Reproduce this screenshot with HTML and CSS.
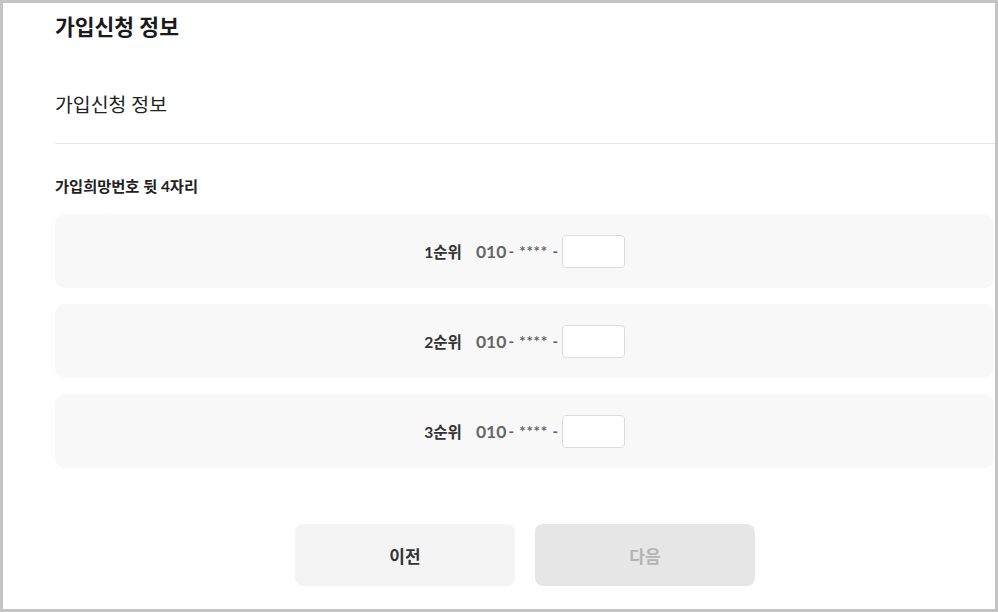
FILE: index.html
```html
<!doctype html>
<html lang="ko">
<head>
  <meta charset="UTF-8">
  <meta name="viewport" content="width=device-width, initial-scale=1.0">
  <title>가입신청 정보</title>
  <link rel="stylesheet" href="styles.css">
</head>
<body>
  <main class="page">
    <h1 class="page-title">가입신청 정보</h1>

    <h2 class="section-title">가입신청 정보</h2>

    <p class="field-label">가입희망번호 뒷 4자리</p>

    <div class="rank-list">
      <div class="rank-row">
        <span class="rank">1순위</span>
        <span class="prefix">010</span>
        <span class="mask">- **** -</span>
        <input type="text" class="num-input" maxlength="4">
      </div>
      <div class="rank-row">
        <span class="rank">2순위</span>
        <span class="prefix">010</span>
        <span class="mask">- **** -</span>
        <input type="text" class="num-input" maxlength="4">
      </div>
      <div class="rank-row">
        <span class="rank">3순위</span>
        <span class="prefix">010</span>
        <span class="mask">- **** -</span>
        <input type="text" class="num-input" maxlength="4">
      </div>
    </div>

    <div class="actions">
      <button class="btn btn-prev">이전</button>
      <button class="btn btn-next" disabled>다음</button>
    </div>
  </main>
</body>
</html>
```

FILE: styles.css
```css
* { box-sizing: border-box; }
html, body { margin: 0; height: 100%; }
body { font-family: Lato, "Noto Sans CJK KR", sans-serif; color: #222; background: #fff; border: 3px solid #c4c4c4; overflow: hidden; }
.page { padding: 0 0 0 52px; }
.page-title { margin: 0; padding-top: 9px; font-size: 21.5px; line-height: 30px; font-weight: 700; color: #1a1a1a; }
.section-title { margin: 0; padding: 49px 0 25px; font-size: 19.4px; line-height: 27px; font-weight: 400; color: #222; border-bottom: 1px solid #e6e6e6; }
.field-label { margin: 32px 0 18px; font-size: 15.3px; line-height: 20px; font-weight: 700; color: #222; }
.rank-list { display: flex; flex-direction: column; gap: 16px; }
.rank-row { height: 74px; background: #f8f8f8; border-radius: 10px; display: flex; align-items: center; justify-content: center; margin-right: 1px; }
.rank { font-size: 15.6px; font-weight: 700; color: #333; margin-right: 14px; }
.prefix { font-size: 17.5px; font-weight: 700; color: #666; }
.mask { font-size: 15px; font-weight: 700; color: #666; margin: 0 3px 0 2px; letter-spacing: 0.8px; }
.num-input { width: 63px; height: 33px; border: 1px solid #dcdcdc; border-radius: 4px; background: #fff; font-size: 15px; padding: 0 8px; }
.actions { display: flex; justify-content: center; gap: 20px; margin-top: 56px; }
.btn { width: 220px; height: 62px; border: none; border-radius: 8px; font-family: inherit; font-size: 17px; font-weight: 700; cursor: pointer; }
.btn-prev { background: #f4f4f4; color: #333; }
.btn-next { background: #e6e6e6; color: #b4b4b4; cursor: default; }
```
